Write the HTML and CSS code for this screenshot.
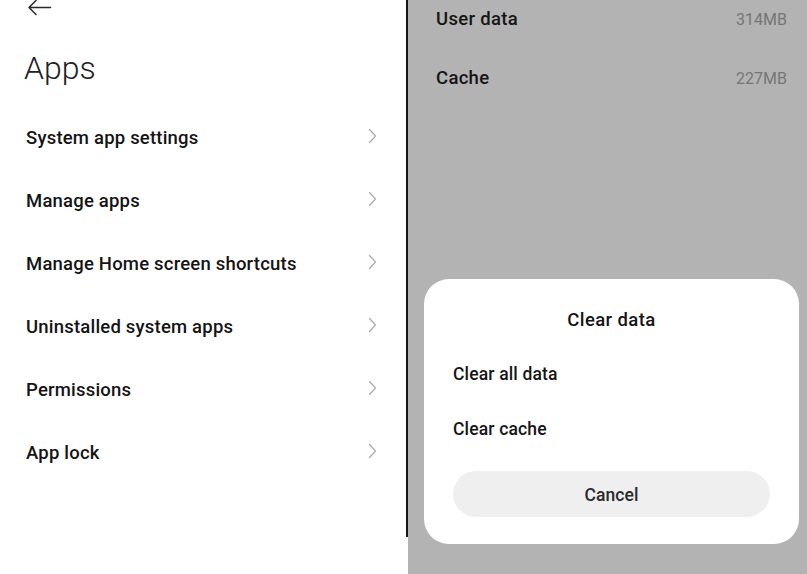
FILE: index.html
```html
<!DOCTYPE html>
<html lang="en">
<head>
<meta charset="utf-8">
<title>Apps</title>
<link rel="stylesheet" href="styles.css">
</head>
<body>
<div class="screen">
  <section class="left">
    <div class="topbar">
      <svg class="back" width="26" height="16" viewBox="0 0 26 16" aria-label="Back">
        <path d="M3 7.5 H24.5 M10 0.5 L3 7.5 L10 14.5" fill="none" stroke="#2a2a2a" stroke-width="1.5" stroke-linecap="round" stroke-linejoin="round"/>
      </svg>
    </div>
    <h1 class="title">Apps</h1>
    <ul class="menu">
      <li class="item"><span>System app settings</span><svg class="chev" width="9" height="16" viewBox="0 0 9 16"><path d="M1.5 1.5 L7.5 8 L1.5 14.5" fill="none" stroke="#adadad" stroke-width="1.3" stroke-linecap="round" stroke-linejoin="round"/></svg></li>
      <li class="item"><span>Manage apps</span><svg class="chev" width="9" height="16" viewBox="0 0 9 16"><path d="M1.5 1.5 L7.5 8 L1.5 14.5" fill="none" stroke="#adadad" stroke-width="1.3" stroke-linecap="round" stroke-linejoin="round"/></svg></li>
      <li class="item"><span>Manage Home screen shortcuts</span><svg class="chev" width="9" height="16" viewBox="0 0 9 16"><path d="M1.5 1.5 L7.5 8 L1.5 14.5" fill="none" stroke="#adadad" stroke-width="1.3" stroke-linecap="round" stroke-linejoin="round"/></svg></li>
      <li class="item"><span>Uninstalled system apps</span><svg class="chev" width="9" height="16" viewBox="0 0 9 16"><path d="M1.5 1.5 L7.5 8 L1.5 14.5" fill="none" stroke="#adadad" stroke-width="1.3" stroke-linecap="round" stroke-linejoin="round"/></svg></li>
      <li class="item"><span>Permissions</span><svg class="chev" width="9" height="16" viewBox="0 0 9 16"><path d="M1.5 1.5 L7.5 8 L1.5 14.5" fill="none" stroke="#adadad" stroke-width="1.3" stroke-linecap="round" stroke-linejoin="round"/></svg></li>
      <li class="item"><span>App lock</span><svg class="chev" width="9" height="16" viewBox="0 0 9 16"><path d="M1.5 1.5 L7.5 8 L1.5 14.5" fill="none" stroke="#adadad" stroke-width="1.3" stroke-linecap="round" stroke-linejoin="round"/></svg></li>
    </ul>
  </section>
  <div class="divider"><div class="divider-line"></div></div>
  <section class="right">
    <div class="stat"><span class="stat-label">User data</span><span class="stat-value">314MB</span></div>
    <div class="stat"><span class="stat-label">Cache</span><span class="stat-value">227MB</span></div>
    <div class="dialog">
      <div class="dialog-title">Clear data</div>
      <div class="option option-first">Clear all data</div>
      <div class="option">Clear cache</div>
      <button class="cancel">Cancel</button>
    </div>
  </section>
</div>
</body>
</html>
```

FILE: styles.css
```css
* { box-sizing: border-box; }
html, body {
  margin: 0;
  padding: 0;
  width: 807px;
  height: 574px;
  overflow: hidden;
  font-family: "Roboto", "Noto Sans", "Liberation Sans", sans-serif;
  color: #111;
}
.screen {
  display: flex;
  width: 807px;
  height: 574px;
}
.left {
  width: 406px;
  background: #fff;
  padding: 0 30px 0 26px;
}
.topbar {
  height: 16px;
}
.back {
  display: block;
  margin-left: 0;
}
.title {
  margin: 33px 0 0 -2px;
  font-size: 32px;
  font-weight: 300;
  line-height: 38px;
  color: #222;
}
.menu {
  list-style: none;
  margin: 20px 0 0 0;
  padding: 0;
}
.item {
  display: flex;
  align-items: center;
  justify-content: space-between;
  height: 63px;
  font-size: 18.5px;
  letter-spacing: 0.2px;
  font-weight: 500;
  line-height: 21px;
  color: #141414;
}
.chev {
  display: block;
  margin-bottom: 5px;
  margin-right: -1px;
}
.divider {
  width: 2px;
  display: flex;
  flex-direction: column;
  background: #fff;
}
.divider-line {
  height: 537px;
  background: #151515;
}
.right {
  position: relative;
  flex: 1;
  background: #b3b3b3;
  padding: 9px 20px 0 28px;
}
.stat {
  display: flex;
  justify-content: space-between;
  align-items: baseline;
  height: 59px;
  line-height: 20px;
}
.stat-label {
  font-size: 18.5px;
  letter-spacing: 0.3px;
  font-weight: 500;
  color: #151515;
}
.stat-value {
  font-size: 16px;
  font-weight: 400;
  color: #767676;
}
.dialog {
  position: absolute;
  left: 16px;
  top: 279px;
  width: 375px;
  height: 265px;
  background: #fff;
  border-radius: 25px;
  padding: 31px 29px 0 29px;
  display: flex;
  flex-direction: column;
}
.dialog-title {
  text-align: center;
  font-size: 18.5px;
  letter-spacing: 0.4px;
  font-weight: 500;
  line-height: 20px;
  color: #151515;
}
.option {
  margin-top: 35px;
  font-size: 17.5px;
  letter-spacing: 0.15px;
  font-weight: 500;
  line-height: 20px;
  color: #151515;
}
.option-first {
  margin-top: 34px;
}
.cancel {
  margin-top: 32px;
  height: 46px;
  width: 100%;
  border: 0;
  border-radius: 23px;
  background: #efefef;
  font-family: inherit;
  font-size: 17.5px;
  letter-spacing: 0.1px;
  font-weight: 500;
  color: #2a2a2a;
  padding: 2px 0 0 0;
}
```
